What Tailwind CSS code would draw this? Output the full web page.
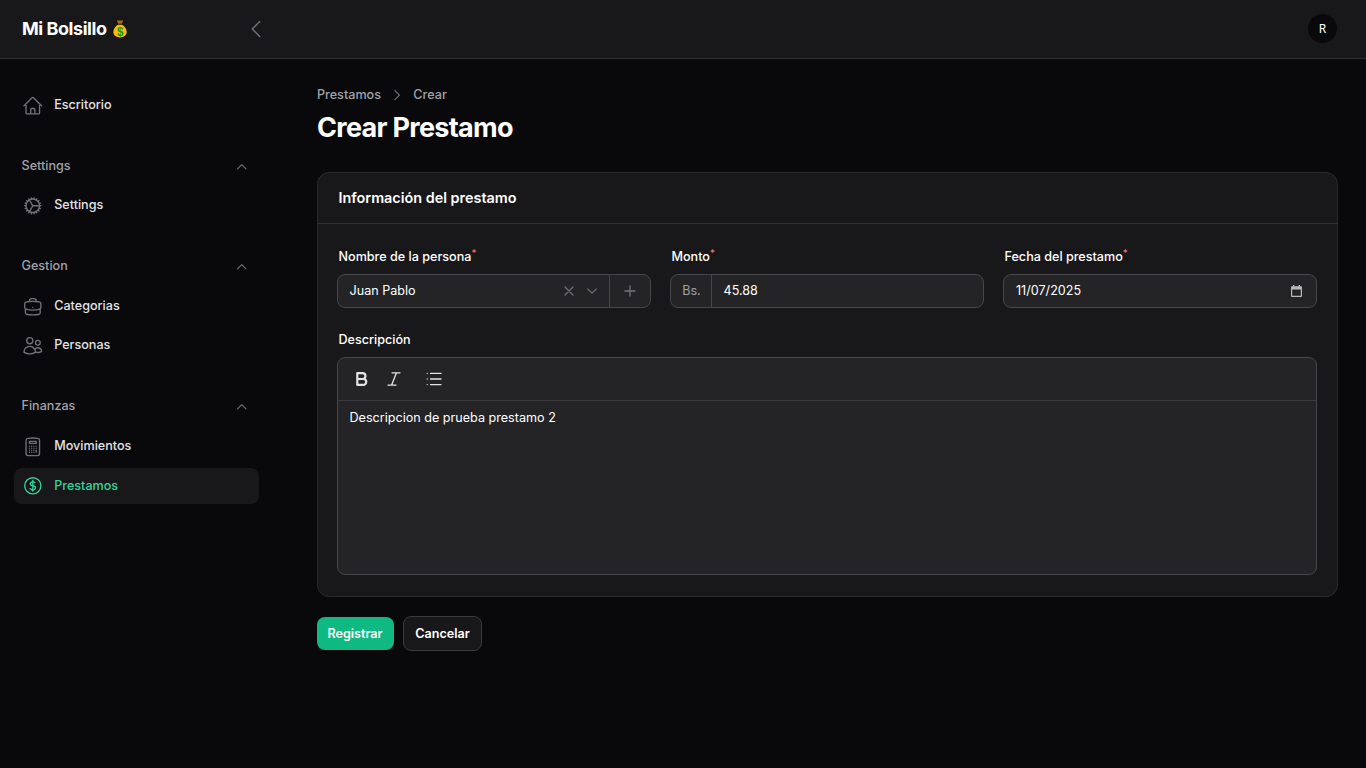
<!DOCTYPE html>
<html lang="es">
<head>
<meta charset="utf-8">
<title>Crear Prestamo</title>
<script src="https://cdn.jsdelivr.net/npm/@tailwindcss/browser@4"></script>
</head>
<body class="bg-[#09090b] font-['Inter',sans-serif] text-white">
<div class="flex h-[768px] flex-col overflow-hidden">
  <header class="flex h-[59px] shrink-0 items-center border-b border-white/10 bg-[#18181b] pb-px pl-[22px] pr-[29px]">
    <div class="flex w-[222px] items-center text-[18px] font-bold tracking-[-0.45px]">Mi Bolsillo
      <svg class="ml-[5.5px] h-[20px] w-[16px]" viewBox="0 0 17 20" preserveAspectRatio="none" aria-label="💰" role="img">
        <path fill="#1c1408" d="M4 .5h9l-1.6 4.6c3 1.6 5.100 4.600 5.100 8 0 4-3.600 6.400-8 6.400s-8-2.400-8-6.400c0-3.400 2.100-6.400 5.100-8Z"/>
        <path fill="#a86a12" d="M5 1.400h7l-1.500 3.400h-4Z"/>
        <path fill="#f7b90f" d="M6.300 5.800h4.400c2.700 1.400 4.900 4.200 4.900 7.300 0 3.400-3.200 5.400-7.100 5.400s-7.100-2-7.100-5.400c0-3.100 2.200-5.900 4.900-7.300Z"/>
        <text x="8.500" y="16.600" text-anchor="middle" font-family="Liberation Sans, sans-serif" font-size="12" font-weight="700" fill="#119c1c">$</text>
      </svg>
    </div>
    <svg class="size-[24px] text-[#71717a]" fill="none" viewBox="0 0 24 24" stroke-width="1.5" stroke="currentColor"><path stroke-linecap="round" stroke-linejoin="round" d="M15.75 19.5 8.25 12l7.5-7.5"/></svg>
    <div class="ml-auto flex size-[29px] items-center justify-center rounded-full bg-[#09090b] font-['Noto_Sans',sans-serif] text-[12px]">R</div>
  </header>
  <div class="flex min-h-0 flex-1">
    <aside class="w-[289px] shrink-0">
      <nav class="flex w-[273px] flex-col gap-[33px] px-[14px] pt-[28.3px]">
        <a class="flex h-[36px] items-center gap-[10.8px] rounded-lg px-[7.8px] text-[12.6px] font-medium text-[#e4e4e7]">
          <svg class="size-[21.6px] text-[#71717a]" fill="none" viewBox="0 0 24 24" stroke-width="1.5" stroke="currentColor"><path stroke-linecap="round" stroke-linejoin="round" d="m2.25 12 8.954-8.955c.44-.439 1.152-.439 1.591 0L21.75 12M4.500 9.750v10.125c0 .621.504 1.125 1.125 1.125H9.750v-4.875c0-.621.504-1.125 1.125-1.125h2.250c.621 0 1.125.504 1.125 1.125V21h4.125c.621 0 1.125-.504 1.125-1.125V9.750M8.250 21h8.250"/></svg>
          Escritorio
        </a>
        <section>
          <div class="mb-[11.5px] flex h-[20px] items-center justify-between pl-[7.5px] pr-[10.5px] text-[12.6px] font-medium text-[#a1a1aa]">Settings
            <svg class="size-[13.5px] text-[#71717a]" fill="none" viewBox="0 0 24 24" stroke-width="2" stroke="currentColor"><path stroke-linecap="round" stroke-linejoin="round" d="m4.500 15.750 7.500-7.500 7.500 7.500"/></svg>
          </div>
          <a class="flex h-[36px] items-center gap-[10.8px] rounded-lg px-[7.8px] text-[12.6px] font-medium text-[#e4e4e7]">
            <svg class="size-[21.6px] text-[#71717a]" fill="none" viewBox="0 0 24 24" stroke-width="1.5" stroke="currentColor"><path stroke-linecap="round" stroke-linejoin="round" d="M4.5 12a7.5 7.5 0 0 0 15 0m-15 0a7.5 7.5 0 1 1 15 0m-15 0H3m16.5 0H21m-1.5 0H12m-8.457 3.077 1.41-.513m14.095-5.13 1.41-.513M5.106 17.785l1.15-.964m11.49-9.642 1.149-.964M7.501 19.795l.75-1.3m7.5-12.99.75-1.3m-6.063 16.658.26-1.477m2.605-14.772.26-1.477m0 17.726-.26-1.477M10.698 4.614l-.26-1.477M16.5 19.794l-.75-1.299M7.5 4.205 12 12m6.894 5.785-1.149-.964M6.256 7.178l-1.15-.964m15.352 8.864-1.41-.513M4.954 9.435l-1.41-.514M12.002 12l-3.75 6.495"/></svg>
            Settings
          </a>
        </section>
        <section>
          <div class="mb-[11.5px] flex h-[20px] items-center justify-between pl-[7.5px] pr-[10.5px] text-[12.6px] font-medium text-[#a1a1aa]">Gestion
            <svg class="size-[13.5px] text-[#71717a]" fill="none" viewBox="0 0 24 24" stroke-width="2" stroke="currentColor"><path stroke-linecap="round" stroke-linejoin="round" d="m4.500 15.750 7.500-7.500 7.500 7.500"/></svg>
          </div>
          <div class="flex flex-col gap-[3.6px]">
            <a class="flex h-[36px] items-center gap-[10.8px] rounded-lg px-[7.8px] text-[12.6px] font-medium text-[#e4e4e7]">
              <svg class="size-[21.6px] text-[#71717a]" fill="none" viewBox="0 0 24 24" stroke-width="1.5" stroke="currentColor"><path stroke-linecap="round" stroke-linejoin="round" d="M20.25 14.15v4.25c0 1.094-.787 2.036-1.872 2.18-2.087.277-4.216.42-6.378.42s-4.291-.143-6.378-.42c-1.085-.144-1.872-1.086-1.872-2.18v-4.25m16.5 0a2.18 2.18 0 0 0 .75-1.661V8.706c0-1.081-.768-2.015-1.837-2.175a48.114 48.114 0 0 0-3.413-.387m4.5 8.006c-.194.165-.42.295-.673.38A23.978 23.978 0 0 1 12 15.75c-2.648 0-5.195-.429-7.577-1.22a2.016 2.016 0 0 1-.673-.38m0 0A2.18 2.18 0 0 1 3 12.489V8.706c0-1.081.768-2.015 1.837-2.175a48.111 48.111 0 0 1 3.413-.387m7.5 0V5.25A2.25 2.25 0 0 0 13.5 3h-3a2.25 2.25 0 0 0-2.25 2.25v.894m7.5 0a48.667 48.667 0 0 0-7.5 0M12 12.75h.008v.008H12v-.008Z"/></svg>
              Categorias
            </a>
            <a class="flex h-[36px] items-center gap-[10.8px] rounded-lg px-[7.8px] text-[12.6px] font-medium text-[#e4e4e7]">
              <svg class="size-[21.6px] text-[#71717a]" fill="none" viewBox="0 0 24 24" stroke-width="1.5" stroke="currentColor"><path stroke-linecap="round" stroke-linejoin="round" d="M15 19.128a9.38 9.38 0 0 0 2.625.372 9.337 9.337 0 0 0 4.121-.952 4.125 4.125 0 0 0-7.533-2.493M15 19.128v-.003c0-1.113-.285-2.16-.786-3.07M15 19.128v.106A12.318 12.318 0 0 1 8.624 21c-2.331 0-4.512-.645-6.374-1.766l-.001-.109a6.375 6.375 0 0 1 11.964-3.07M12 6.375a3.375 3.375 0 1 1-6.75 0 3.375 3.375 0 0 1 6.75 0Zm8.25 2.25a2.625 2.625 0 1 1-5.25 0 2.625 2.625 0 0 1 5.25 0Z"/></svg>
              Personas
            </a>
          </div>
        </section>
        <section>
          <div class="mb-[11.5px] flex h-[20px] items-center justify-between pl-[7.5px] pr-[10.5px] text-[12.6px] font-medium text-[#a1a1aa]">Finanzas
            <svg class="size-[13.5px] text-[#71717a]" fill="none" viewBox="0 0 24 24" stroke-width="2" stroke="currentColor"><path stroke-linecap="round" stroke-linejoin="round" d="m4.500 15.750 7.500-7.500 7.500 7.500"/></svg>
          </div>
          <div class="flex flex-col gap-[3.6px]">
            <a class="flex h-[36px] items-center gap-[10.8px] rounded-lg px-[7.8px] text-[12.6px] font-medium text-[#e4e4e7]">
              <svg class="size-[21.6px] text-[#71717a]" fill="none" viewBox="0 0 24 24" stroke-width="1.5" stroke="currentColor"><path stroke-linecap="round" stroke-linejoin="round" d="M15.75 15.75V18m-7.5-6.75h.008v.008H8.25v-.008Zm0 2.25h.008v.008H8.25V13.5Zm0 2.25h.008v.008H8.25v-.008Zm0 2.25h.008v.008H8.25V18Zm2.498-6.75h.007v.008h-.007v-.008Zm0 2.25h.007v.008h-.007V13.5Zm0 2.25h.007v.008h-.007v-.008Zm0 2.25h.007v.008h-.007V18Zm2.504-6.75h.008v.008h-.008v-.008Zm0 2.25h.008v.008h-.008V13.5Zm0 2.25h.008v.008h-.008v-.008Zm0 2.25h.008v.008h-.008V18Zm2.498-6.75h.008v.008h-.008v-.008Zm0 2.25h.008v.008h-.008V13.5ZM8.25 6h7.5v2.25h-7.5V6ZM12 2.25c-1.892 0-3.758.11-5.593.322C5.307 2.7 4.5 3.65 4.5 4.757V19.5a2.25 2.25 0 0 0 2.25 2.25h10.5a2.25 2.25 0 0 0 2.25-2.25V4.757c0-1.108-.806-2.057-1.907-2.185A48.507 48.507 0 0 0 12 2.25Z"/></svg>
              Movimientos
            </a>
            <a class="flex h-[36px] items-center gap-[10.8px] rounded-lg bg-[#18181b] px-[7.8px] text-[12.6px] font-medium text-[#34d399]">
              <svg class="size-[21.6px] text-[#34d399]" fill="none" viewBox="0 0 24 24" stroke-width="1.5" stroke="currentColor"><path stroke-linecap="round" stroke-linejoin="round" d="M12 6v12m-3-2.818.879.659c1.171.879 3.07.879 4.242 0 1.172-.879 1.172-2.303 0-3.182C13.536 12.219 12.768 12 12 12c-.725 0-1.45-.22-2.003-.659-1.106-.879-1.106-2.303 0-3.182s2.9-.879 4.006 0l.415.33M21 12a9 9 0 1 1-18 0 9 9 0 0 1 18 0Z"/></svg>
              Prestamos
            </a>
          </div>
        </section>
      </nav>
    </aside>
    <main class="min-w-0 flex-1 px-[28px] pt-[26.5px]">
      <div class="flex h-[20px] items-center gap-[9px] text-[12.6px] font-medium text-[#a1a1aa]">
        <span>Prestamos</span>
        <svg class="size-[14.4px] text-[#71717a]" fill="none" viewBox="0 0 24 24" stroke-width="2" stroke="currentColor"><path stroke-linecap="round" stroke-linejoin="round" d="m8.250 4.500 7.500 7.500-7.500 7.500"/></svg>
        <span>Crear</span>
      </div>
      <h1 class="mt-[2.5px] h-[40px] text-[27px] leading-[40px] font-bold tracking-[-0.7px]">Crear Prestamo</h1>
      <section class="mt-[24px] h-[425px] rounded-xl border border-[#2a2a2d] bg-[#18181b]">
        <div class="flex h-[51px] items-center border-b border-white/10 pl-[20.5px] text-[14.4px] font-semibold">Información del prestamo</div>
        <div class="pl-[19px] pr-[20px] pt-[22.5px]">
          <div class="grid grid-cols-3 gap-[19px]">
            <div>
              <div class="mb-[7.5px] h-[20px] pl-[1.5px] text-[12.6px] leading-[20px] font-medium">Nombre de la persona<sup class="text-[#f87171]">*</sup></div>
              <div class="flex h-[34px] items-center rounded-lg border border-[#46464a] bg-white/5 text-[12.6px]">
                <span class="flex-1 pl-[11.5px]">Juan Pablo</span>
                <svg class="mr-[8px] size-[16px] text-[#71717a]" fill="none" viewBox="0 0 24 24" stroke-width="1.8" stroke="currentColor"><path stroke-linecap="round" stroke-linejoin="round" d="M6 18 18 6M6 6l12 12"/></svg>
                <svg class="mr-[10px] size-[14px] text-[#71717a]" fill="none" viewBox="0 0 24 24" stroke-width="2" stroke="currentColor"><path stroke-linecap="round" stroke-linejoin="round" d="m19.500 8.250-7.500 7.500-7.500-7.500"/></svg>
                <div class="flex h-full w-[41px] items-center justify-center border-l border-[#46464a]">
                  <svg class="size-[16px] text-[#71717a]" fill="none" viewBox="0 0 24 24" stroke-width="2" stroke="currentColor"><path stroke-linecap="round" stroke-linejoin="round" d="M12 4.500v15m7.500-7.500h-15"/></svg>
                </div>
              </div>
            </div>
            <div>
              <div class="mb-[7.5px] h-[20px] pl-[1.5px] text-[12.6px] leading-[20px] font-medium">Monto<sup class="text-[#f87171]">*</sup></div>
              <div class="flex h-[34px] items-center rounded-lg border border-[#46464a] bg-white/5 text-[12.6px]">
                <div class="flex h-full w-[41px] items-center justify-center border-r border-[#46464a] pl-px text-[#a1a1aa]">Bs.</div>
                <span class="pl-[11.5px]">45.88</span>
              </div>
            </div>
            <div>
              <div class="mb-[7.5px] h-[20px] pl-[1.5px] text-[12.6px] leading-[20px] font-medium">Fecha del prestamo<sup class="text-[#f87171]">*</sup></div>
              <div class="flex h-[34px] items-center justify-between rounded-lg border border-[#46464a] bg-white/5 pl-[12px] pr-[14px] text-[12.6px]">
                <span>11/07/2025</span>
                <svg class="h-[12px] w-[11px] text-[#b8b8bc]" viewBox="0 0 11 12"><path fill="currentColor" fill-rule="evenodd" d="M2 0h1.300v1.300h4.400V0H9v1.300h1a1 1 0 0 1 1 1V11a1 1 0 0 1-1 1H1a1 1 0 0 1-1-1V2.300a1 1 0 0 1 1-1h1V0ZM1.200 4.500v6.300h8.600V4.500H1.200Z"/></svg>
              </div>
            </div>
          </div>
          <div class="mb-[7px] mt-[22px] h-[20px] pl-[1.5px] text-[12.6px] leading-[20px] font-medium">Descripción</div>
          <div class="h-[218px] rounded-lg border border-[#46464a] bg-white/5">
            <div class="flex h-[43px] items-center border-b border-white/10 pl-[14.500px] text-[#e4e4e7]">
              <svg class="size-[18px]" fill="none" viewBox="0 0 18 18" stroke-width="2.200" stroke="currentColor"><path stroke-linejoin="round" d="M4.300 3.100h5.200a2.950 2.950 0 0 1 0 5.900H4.300Zm0 5.900h6a2.950 2.950 0 0 1 0 5.900h-6Z"/></svg>
              <svg class="ml-[14.500px] size-[18px]" fill="none" viewBox="0 0 18 18" stroke-width="1.300" stroke="currentColor"><path stroke-linecap="round" d="M7 2.800h8M3 15.200h8M11.500 2.800 6.500 15.200"/></svg>
              <svg class="ml-[22px] size-[18px]" fill="none" viewBox="0 0 18 18" stroke-width="1.300" stroke="currentColor"><path stroke-linecap="round" d="M5.500 3.400H16M5.500 9H16M5.500 14.600H16M2.200 3.400h.01M2.200 9h.01M2.200 14.600h.01"/></svg>
            </div>
            <div class="px-[11.5px] pt-[7px] text-[12.6px] leading-[20px]">Descripcion de prueba prestamo 2</div>
          </div>
        </div>
      </section>
      <div class="mt-[19px] flex items-center gap-[9px] text-[12.6px] font-semibold">
        <button class="flex h-[33px] w-[77px] items-center justify-center rounded-lg bg-[#10b981] pr-px pt-[1.5px]">Registrar</button>
        <button class="flex h-[35px] w-[79px] items-center justify-center rounded-lg border border-[#3a3a3c] bg-[#18181b] pt-[1.5px]">Cancelar</button>
      </div>
    </main>
  </div>
</div>
</body>
</html>
